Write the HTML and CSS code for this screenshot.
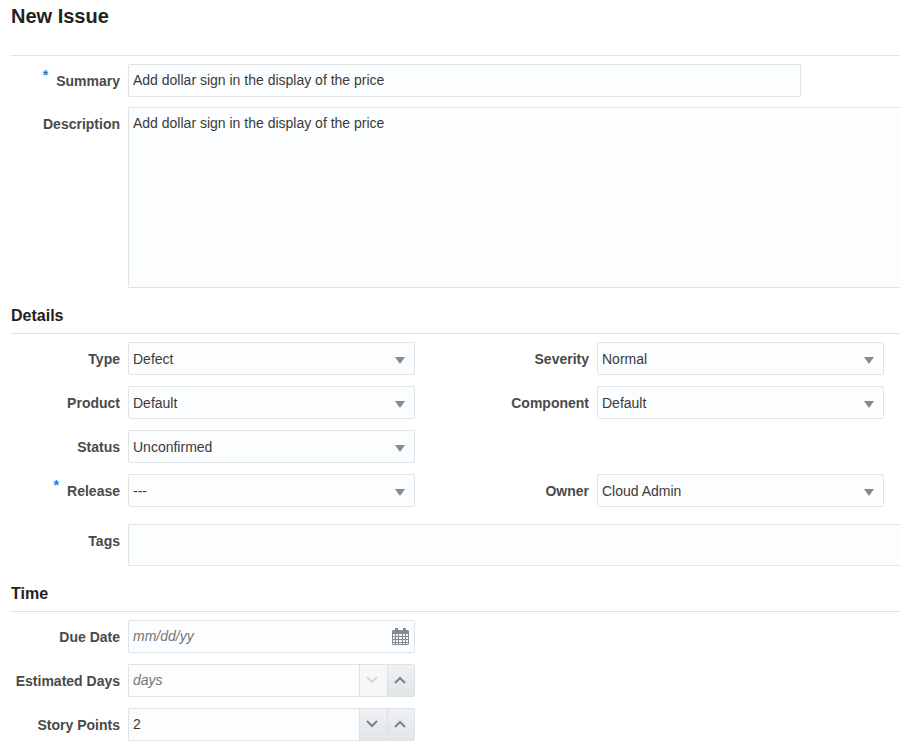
FILE: index.html
```html
<!DOCTYPE html>
<html lang="en">
<head>
<meta charset="utf-8">
<meta name="viewport" content="width=device-width, initial-scale=1">
<title>New Issue</title>
<link rel="stylesheet" href="styles.css">
</head>
<body>
<form class="issue">
  <h1 class="title">New Issue</h1>

  <section class="section">
    <div class="row">
      <label class="label" for="summary"><span class="required">*</span>Summary</label>
      <input class="field summary" id="summary" type="text" value="Add dollar sign in the display of the price">
    </div>
    <div class="row row-top">
      <label class="label" for="description">Description</label>
      <textarea class="field description bleed" id="description">Add dollar sign in the display of the price</textarea>
    </div>
  </section>

  <h2 class="heading">Details</h2>
  <section class="section">
    <div class="columns">
      <div class="row">
        <label class="label" for="type">Type</label>
        <div class="control">
          <select class="field" id="type"><option>Defect</option></select>
          <svg class="arrow" viewBox="0 0 10 7"><path d="M0 0h10L5 7z"/></svg>
        </div>
      </div>
      <div class="row">
        <label class="label" for="severity">Severity</label>
        <div class="control">
          <select class="field" id="severity"><option>Normal</option></select>
          <svg class="arrow" viewBox="0 0 10 7"><path d="M0 0h10L5 7z"/></svg>
        </div>
      </div>
      <div class="row">
        <label class="label" for="product">Product</label>
        <div class="control">
          <select class="field" id="product"><option>Default</option></select>
          <svg class="arrow" viewBox="0 0 10 7"><path d="M0 0h10L5 7z"/></svg>
        </div>
      </div>
      <div class="row">
        <label class="label" for="component">Component</label>
        <div class="control">
          <select class="field" id="component"><option>Default</option></select>
          <svg class="arrow" viewBox="0 0 10 7"><path d="M0 0h10L5 7z"/></svg>
        </div>
      </div>
      <div class="row first">
        <label class="label" for="status">Status</label>
        <div class="control">
          <select class="field" id="status"><option>Unconfirmed</option></select>
          <svg class="arrow" viewBox="0 0 10 7"><path d="M0 0h10L5 7z"/></svg>
        </div>
      </div>
      <div class="row first">
        <label class="label" for="release"><span class="required">*</span>Release</label>
        <div class="control">
          <select class="field" id="release"><option>---</option></select>
          <svg class="arrow" viewBox="0 0 10 7"><path d="M0 0h10L5 7z"/></svg>
        </div>
      </div>
      <div class="row">
        <label class="label" for="owner">Owner</label>
        <div class="control">
          <select class="field" id="owner"><option>Cloud Admin</option></select>
          <svg class="arrow" viewBox="0 0 10 7"><path d="M0 0h10L5 7z"/></svg>
        </div>
      </div>
    </div>
    <div class="row row-top tags-row">
      <label class="label" for="tags">Tags</label>
      <input class="field tags bleed" id="tags" type="text">
    </div>
  </section>

  <h2 class="heading">Time</h2>
  <section class="section">
    <div class="columns">
      <div class="row first">
        <label class="label" for="due">Due Date</label>
        <div class="control">
          <input class="field date" id="due" type="text" placeholder="mm/dd/yy">
          <button class="calendar" type="button" aria-label="Choose date">
            <svg viewBox="0 0 17 17">
              <path fill="#858b8f" d="M1 2h2V0h3v2h5V0h3v2h2l1 1v13l-1 1H1l-1-1V3z"/>
              <path fill="#f4f6f7" d="M1 6h2v2H1zM4 6h2v2H4zM7 6h3v2H7zM11 6h2v2h-2zM14 6h2v2h-2zM1 9h2v2H1zM4 9h2v2H4zM7 9h3v2H7zM11 9h2v2h-2zM14 9h2v2h-2zM1 12h2v2H1zM4 12h2v2H4zM7 12h3v2H7zM11 12h2v2h-2zM14 12h2v2h-2zM1 15h2v1H1zM4 15h2v1H4zM7 15h3v1H7zM11 15h2v1h-2zM14 15h2v1h-2z"/>
            </svg>
          </button>
        </div>
      </div>
      <div class="row first">
        <label class="label" for="days">Estimated Days</label>
        <div class="control spinner">
          <input class="field" id="days" type="text" placeholder="days">
          <button class="step" type="button" aria-label="Fewer days" disabled><svg viewBox="0 0 12 8"><path d="M1 1l5 5 5-5"/></svg></button>
          <button class="step" type="button" aria-label="More days"><svg viewBox="0 0 12 8"><path d="M1 7l5-5 5 5"/></svg></button>
        </div>
      </div>
      <div class="row first">
        <label class="label" for="points">Story Points</label>
        <div class="control spinner">
          <input class="field" id="points" type="text" value="2">
          <button class="step" type="button" aria-label="Fewer points"><svg viewBox="0 0 12 8"><path d="M1 1l5 5 5-5"/></svg></button>
          <button class="step" type="button" aria-label="More points"><svg viewBox="0 0 12 8"><path d="M1 7l5-5 5 5"/></svg></button>
        </div>
      </div>
    </div>
  </section>
</form>
</body>
</html>
```
FILE: styles.css
```css
* {
  box-sizing: border-box;
}

body {
  margin: 0;
  background: #fff;
  color: #3a3a3a;
  font: 14px/20px "Liberation Sans", Arial, sans-serif;
}

.issue {
  padding: 4px 0 8px 11px;
}

.title {
  margin: 0;
  padding-bottom: 27px;
  color: #222;
  font-size: 20px;
  line-height: 24px;
}

.heading {
  margin: 18px 0 0;
  padding-bottom: 7px;
  color: #222;
  font-size: 16px;
  line-height: 20px;
}

.section {
  display: grid;
  gap: 10px;
  border-top: 1px solid #dfe2e4;
  padding-top: 8px;
}

.columns {
  display: grid;
  grid-template-columns: 1fr 1fr;
  gap: 11px 65px;
  padding-right: 16px;
}

.first {
  grid-column: 1;
}

.row {
  display: grid;
  grid-template-columns: 109px minmax(0, 1fr);
  column-gap: 8px;
  align-items: center;
}

.row-top {
  align-items: start;
}

.row-top .label {
  padding-top: 7px;
}

.tags-row {
  margin-top: 7px;
}

.label {
  color: #4a4a4a;
  font-weight: bold;
  text-align: right;
  white-space: nowrap;
}

.required {
  margin-right: 8px;
  color: #1c7cd5;
  line-height: 0;
  vertical-align: 6px;
}

.control {
  position: relative;
  display: flex;
}

.field {
  display: block;
  width: 100%;
  height: 33px;
  margin: 0;
  padding: 0 4px;
  border: 1px solid #dfe4e7;
  border-radius: 2px;
  background: #fcfdfe;
  color: #3a3a3a;
  font: inherit;
  appearance: none;
  outline: none;
}

input.field {
  padding-bottom: 2px;
}

.field::placeholder {
  color: #757575;
  font-style: italic;
  opacity: 1;
}

.bleed {
  border-right: 0;
  border-radius: 2px 0 0 2px;
}

.summary {
  max-width: 673px;
}

.description {
  height: 181px;
  padding-top: 5px;
  resize: none;
}

.tags {
  height: 42px;
}

.arrow {
  position: absolute;
  top: 15px;
  right: 10px;
  width: 10px;
  height: 7px;
  fill: #858b8f;
  pointer-events: none;
}

.date {
  padding-right: 30px;
}

.calendar {
  position: absolute;
  top: 8px;
  right: 6px;
  padding: 0;
  border: 0;
  background: none;
}

.calendar svg {
  display: block;
  width: 17px;
  height: 17px;
}

.spinner .field {
  flex: 1;
  min-width: 0;
  border-right: 0;
  border-radius: 2px 0 0 2px;
}

.step {
  display: grid;
  place-items: center;
  width: 28px;
  height: 33px;
  padding: 0 3px 2px 0;
  border: 1px solid #dce1e4;
  border-right: 0;
  background: linear-gradient(#eff1f3, #e2e6e9);
}

.step:last-child {
  border-right: 1px solid #dce1e4;
  border-radius: 0 2px 2px 0;
}

.step svg {
  width: 12px;
  height: 8px;
  fill: none;
  stroke: #7c8388;
  stroke-width: 2;
}

.step:disabled {
  background: #f5f7f8;
}

.step:disabled svg {
  stroke: #d2d6d8;
}
```
